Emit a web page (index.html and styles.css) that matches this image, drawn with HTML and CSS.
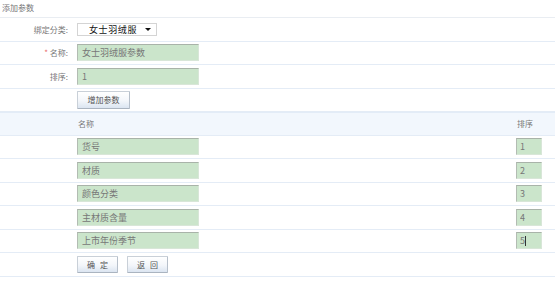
FILE: index.html
```html
<!DOCTYPE html>
<html lang="zh-CN">
<head>
<meta charset="utf-8">
<title>添加参数</title>
<link rel="stylesheet" href="styles.css">
</head>
<body>
<div class="page">
  <div class="title">添加参数</div>
  <div class="row form-row">
    <div class="label">绑定分类:</div>
    <div class="field">
      <div class="select"><span class="select-text">女士羽绒服</span><span class="arrow"></span></div>
    </div>
  </div>
  <div class="row form-row">
    <div class="label"><span class="req">*</span> 名称:</div>
    <div class="field"><input class="inp inp-wide" value="女士羽绒服参数" readonly></div>
  </div>
  <div class="row form-row">
    <div class="label">排序:</div>
    <div class="field"><input class="inp inp-wide" value="1" readonly></div>
  </div>
  <div class="row form-row">
    <div class="label"></div>
    <div class="field"><button class="btn btn-add">增加参数</button></div>
  </div>
  <div class="row data-row head">
    <div></div>
    <div class="hcell">名称</div>
    <div class="hcell">排序</div>
  </div>
  <div class="row data-row">
    <div></div>
    <div class="field"><input class="inp inp-wide" value="货号" readonly></div>
    <div class="field"><input class="inp inp-sort" value="1" readonly></div>
  </div>
  <div class="row data-row">
    <div></div>
    <div class="field"><input class="inp inp-wide" value="材质" readonly></div>
    <div class="field"><input class="inp inp-sort" value="2" readonly></div>
  </div>
  <div class="row data-row">
    <div></div>
    <div class="field"><input class="inp inp-wide" value="颜色分类" readonly></div>
    <div class="field"><input class="inp inp-sort" value="3" readonly></div>
  </div>
  <div class="row data-row">
    <div></div>
    <div class="field"><input class="inp inp-wide" value="主材质含量" readonly></div>
    <div class="field"><input class="inp inp-sort" value="4" readonly></div>
  </div>
  <div class="row data-row">
    <div></div>
    <div class="field"><input class="inp inp-wide" value="上市年份季节" readonly></div>
    <div class="field"><span class="caret-wrap"><input class="inp inp-sort" value="5" readonly><span class="caret"></span></span></div>
  </div>
  <div class="row form-row actions">
    <div class="label"></div>
    <div class="field btns"><button class="btn btn-sm">确 定</button><button class="btn btn-sm">返 回</button></div>
  </div>
</div>
</body>
</html>
```
FILE: styles.css
```css
* { box-sizing: border-box; }
html, body { margin: 0; padding: 0; background: #fff; }
body {
  font-family: "Noto Sans CJK SC", "Liberation Sans", sans-serif;
  font-size: 8px;
  color: #777;
}
.page { width: 555px; }
.title {
  height: 18px;
  line-height: 16px;
  padding-left: 2px;
  border-bottom: 1px solid #e9edf2;
}
.row {
  height: 23.5px;
  border-bottom: 1px solid #e4ecf6;
  display: grid;
  align-items: center;
}
.form-row { grid-template-columns: 68px 1fr; column-gap: 9px; }
.data-row { grid-template-columns: 77px 439px 39px; }
.head { background: #f2f7fd; border-top: 1px solid #e3ecf7; }
.hcell { padding-left: 1px; }
.label { text-align: right; }
.req { color: #e86a6a; }
.field { display: flex; align-items: center; }
.select {
  width: 80px;
  height: 13px;
  border: 1px solid #d4d4d4;
  background: #fff;
  display: flex;
  align-items: center;
  padding-left: 11px;
  position: relative;
}
.select-text { font-size: 9px; color: #111; letter-spacing: 0.6px; }
.arrow {
  position: absolute;
  right: 5px;
  top: 4px;
  border-left: 3px solid transparent;
  border-right: 3px solid transparent;
  border-top: 3px solid #111;
}
.inp {
  font-family: inherit;
  font-size: 9px;
  color: #777;
  height: 17px;
  padding: 0 0 0 4px;
  margin: 0;
  background: #cbe5cb;
  border: 1px solid #d8e6d8;
  border-top-color: #a9b3a9;
  border-left-color: #b3bcb3;
  outline: none;
  display: block;
}
.inp-wide { width: 122px; }
.inp-sort { width: 26px; padding-left: 3px; }
.caret-wrap { position: relative; display: block; }
.caret {
  position: absolute;
  left: 9px;
  top: 4px;
  width: 1px;
  height: 10px;
  background: #333;
}
.btn {
  font-family: inherit;
  font-size: 8px;
  color: #555;
  margin: 0;
  padding: 0;
  background: linear-gradient(#ffffff, #f3f6fa 55%, #dbe5f1);
  border: 1px solid #c9d0d8;
  border-bottom-color: #aab4c0;
  border-right-color: #b6bfca;
  border-radius: 1px;
}
.btn-add { width: 53px; height: 18px; }
.btns { gap: 9px; }
.btn-sm { width: 41px; height: 17px; word-spacing: 3px; }
```
